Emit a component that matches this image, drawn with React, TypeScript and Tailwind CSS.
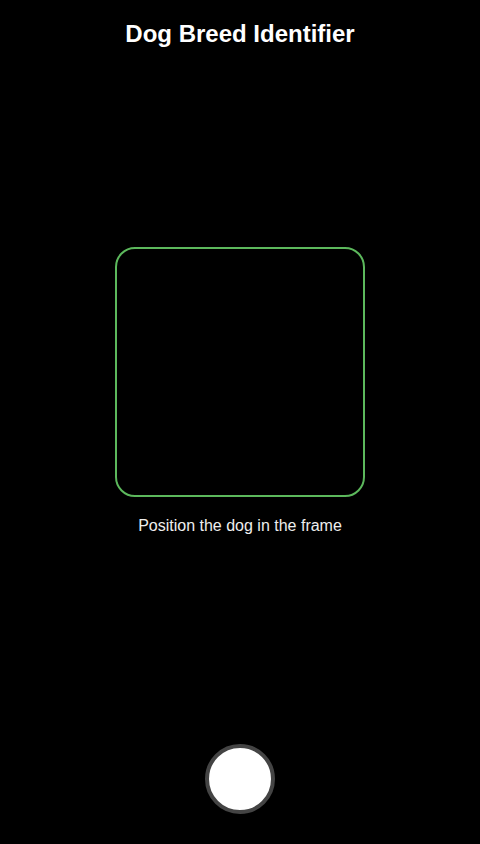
export default function App() {
  return (
    <div
      className="flex h-screen w-full flex-col bg-black text-white"
      style={{ fontFamily: '"Liberation Sans", Arial, sans-serif' }}
    >
      <header className="pt-[20px] pb-[20px] text-center">
        <h1 className="text-[24px] font-bold leading-[28px]">Dog Breed Identifier</h1>
      </header>

      <main className="flex flex-1 flex-col items-center justify-center">
        <div className="h-[250px] w-[250px] rounded-[20px] border-2 border-[#5cb85c]" />
        <p className="mt-[20px] text-[16px] leading-[18px] text-[#eeeeee]">Position the dog in the frame</p>
      </main>

      <footer className="flex justify-center pt-[30px] pb-[30px]">
        <button className="h-[70px] w-[70px] rounded-full border-4 border-[#444444] bg-white" />
      </footer>
    </div>
  );
}
